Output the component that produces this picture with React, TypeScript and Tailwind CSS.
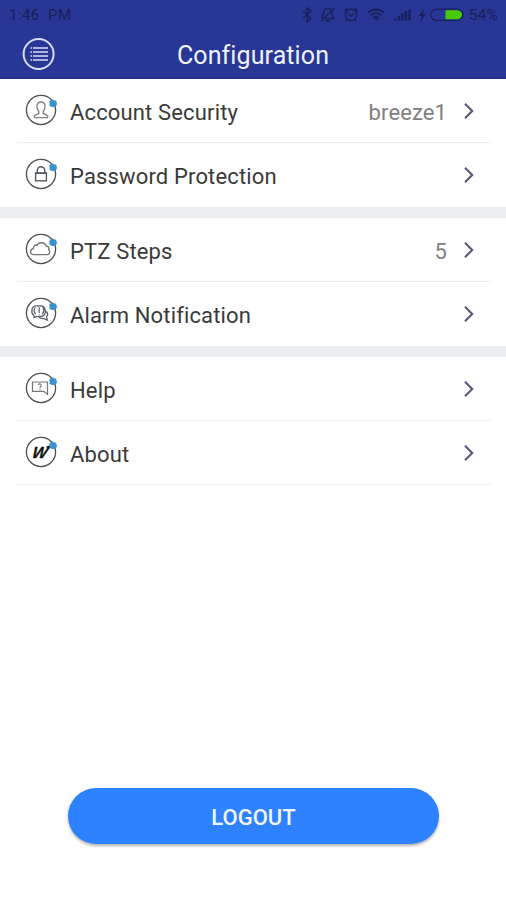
import React from 'react';

interface RowProps {
  icon: React.ReactNode;
  label: string;
  value?: string;
  last?: boolean;
}

const BadgeIcon: React.FC<{ children: React.ReactNode }> = ({ children }) => (
  <svg width="34" height="34" viewBox="0 0 34 34" fill="none" stroke="#555a5e" strokeWidth="1.2" className="mb-[2px] shrink-0">
    <circle cx="17" cy="17" r="14.6" stroke="#4b4f52" strokeWidth="1.3" />
    {children}
    <path d="M25.3 9.2l.7-1.6 1.6-.1 1.4-1.2 1.4 1.1 1.8.2.3 1.9.7 1.4-.8 1.3-.7 1.4-1.7.1-1.4.6-1.5-.7-1.8-.5.4-1.8z" fill="#3c91cf" stroke="none" />
  </svg>
);

const AccountIcon = () => (
  <BadgeIcon>
    <path d="M14.8 18.3c-1.1-1-1.8-2.8-1.8-4.8 0-2.7 1.7-4.5 4-4.5s4 1.8 4 4.5c0 2-.7 3.8-1.8 4.8v2.2l4.1 1.8c.7.4.8 2.3-.3 2.3H11c-1.1 0-1-1.9-.3-2.3l4.1-1.8z" stroke="#858585" strokeWidth="1.4" />
  </BadgeIcon>
);

const LockIcon = () => (
  <BadgeIcon>
    <rect x="11.6" y="16" width="10.8" height="7.8" strokeWidth="1.4" />
    <path d="M13.3 16v-2.5a3.7 3.7 0 0 1 7.4 0V16M11.6 16.3h10.8" strokeWidth="1.5" />
  </BadgeIcon>
);

const CloudIcon = () => (
  <BadgeIcon>
    <path d="M9.3 22.6c-3.9-.6-3.7-5.4 0-5.9 0-2.5 1.9-4.4 3.7-3.4 1.5-3.6 8-3.7 9.5 1.1 2.1-.3 2.9 1.4 2.1 3.2 1.9 1 1.2 4.7-1 5z" stroke="#777" strokeWidth="1.4" />
  </BadgeIcon>
);

const AlarmIcon = () => (
  <BadgeIcon>
    <path d="M10 21.4v-1.6c-3.4-2.7-2.8-9.5 1.8-10h5c4 .1 5.8 4.9 3.8 8.6-1.2 2-4.4 2.6-7.7 2.2zM15.2 11.2v5.8M15.2 18.4v1.2M11.2 11.5c-1.6 2-1.1 4.8.4 6.6M18.9 11.5c1.4 2 .9 4.8-.7 6.6" />
    <path d="M22 15.4c2.2 1.3 2.2 4.2.5 5.5l.9 3.3-3.2-1.6c-2.1.2-4.3-.2-5.4-1.5" />
  </BadgeIcon>
);

const HelpIcon = () => (
  <BadgeIcon>
    <path d="M8.5 11h15v12.4l-3.7-3H8.5z" stroke="#777" />
    <path d="M14.2 14.1c0-1.7 3.1-1.8 3 .1 0 1.3-1.2 1.4-1.2 2.7M16 18.1v1" stroke="#777" />
  </BadgeIcon>
);

const AboutIcon = () => (
  <BadgeIcon>
    <text x="8.4" y="22.8" fill="#111" stroke="#111" strokeWidth=".3" fontFamily="Liberation Sans, sans-serif" fontSize="16" fontWeight="700" fontStyle="italic" transform="skewX(-14) translate(4.6 0)">
      W
    </text>
    <path d="M22.5 12.4c1-.9 2-1.1 3.5-1" stroke="#111" strokeWidth="1.4" />
  </BadgeIcon>
);

const Row: React.FC<RowProps> = ({ icon, label, value, last }) => (
  <div className={`mr-[15px] ml-[17px] flex h-16 items-center border-b pr-[16px] pl-[7px] ${last ? 'border-transparent' : 'border-[#eeeff0]'}`}>
    {icon}
    <span className="ml-[12px] pt-[3px] text-[22px] tracking-[0.15px] text-[#3a3a3a]">{label}</span>
    <span className="mr-[16px] ml-auto pt-[3px] text-[22px] tracking-[0.1px] text-[#808080]">{value}</span>
    <svg width="12" height="18" viewBox="0 0 12 18" fill="none" stroke="#565978" strokeWidth="2.1" className="shrink-0">
      <path d="M2 1.8L9.2 9 2 16.2" />
    </svg>
  </div>
);

const StatusBar = () => (
  <div className="flex h-[30px] items-center justify-between pr-[8px] pl-[9px] text-[#18205b]">
    <span className="text-[15px] tracking-[0.45px] whitespace-pre">1:46  PM</span>
    <div className="flex items-center">
      <svg width="168" height="20" viewBox="301 5 168 20" fill="none" stroke="currentColor" strokeWidth="1.4">
        <path d="M303 11l8 7.5-4 3V8l4 3-8 7.5" />
        <path d="M321.5 18.5c2-2 1.5-7 3.5-9 2-1.8 4.5-1.5 6 .3 1.5 2 .7 6.5 2.8 8.7h-9M325 20.8h5M321 21L334.5 8" />
        <circle cx="351" cy="15" r="5.7" />
        <path d="M347.8 13.5l3.2 2.7 3.2-2.7M344.5 11l3-3M357.5 11l-3-3M347.2 19.3l-1.4 1.9M354.8 19.3l1.4 1.9" />
        <path d="M368 12.8c4.8-4.5 11.5-4.5 16.3 0M370.7 15.4c3.3-3 7.6-3 10.9 0M373.2 18c1.9-1.7 4-1.7 5.9 0" strokeWidth="1.9" />
        <path d="M373.8 18.2l2.4 2.5 2.4-2.5z" fill="currentColor" stroke="none" />
        <path d="M395.5 20.5v-2.2M399 20.5v-4.5M402.5 20.5v-7M406 20.5v-9.5M409.5 20.5V9.5" strokeWidth="2.3" />
        <path d="M424.5 9l-6 7h3.3l-1.8 5.8 6-7.8h-3.3z" fill="currentColor" stroke="none" />
        <path d="M436.5 9.2h20c3.4 0 6.5 2.6 6.5 5.6s-3.1 5.6-6.5 5.6h-20c-3.2 0-5.7-2.6-5.7-5.6s2.5-5.6 5.7-5.6z" strokeWidth="1.2" />
        <path d="M445.5 10.3H457c2.7 0 5 2 5 4.5s-2.3 4.5-5 4.5h-11.5z" fill="#48ca06" stroke="none" />
      </svg>
      <span className="pt-[2px] text-[15.5px] tracking-[0.2px]">54%</span>
    </div>
  </div>
);

const Divider = () => <div className="h-[11px] bg-[#ebeef0]" />;

export default function App() {
  return (
    <div className="flex h-[900px] w-[506px] flex-col overflow-hidden bg-white font-[Roboto,sans-serif]">
      <header className="h-[79px] border-b border-[#202d82] bg-[#283795]">
        <StatusBar />
        <div className="grid h-[48px] grid-cols-[56px_1fr_56px] items-center">
          <svg width="34" height="34" viewBox="0 0 34 34" fill="none" stroke="#d9dcf6" className="ml-[22px]">
            <circle cx="16.6" cy="17" r="15" strokeWidth="2" />
            <path d="M8.5 11h1.5M11 11h15M8.5 15h1.5M11 15h15M8.5 19h1.5M11 19h15M8.5 23h1.5M11 23h15" strokeWidth="1.5" />
          </svg>
          <h1 className="pt-[3px] text-center text-[25px] tracking-[0.1px] text-[#f0f2ff]">Configuration</h1>
        </div>
      </header>

      <main className="flex flex-1 flex-col">
        <Row icon={<AccountIcon />} label="Account Security" value="breeze1" />
        <Row icon={<LockIcon />} label="Password Protection" last />
        <Divider />
        <Row icon={<CloudIcon />} label="PTZ Steps" value="5" />
        <Row icon={<AlarmIcon />} label="Alarm Notification" last />
        <Divider />
        <Row icon={<HelpIcon />} label="Help" />
        <Row icon={<AboutIcon />} label="About" />

        <button className="mx-auto mt-auto mb-[56px] h-[56px] w-[371px] rounded-full bg-[#2e82ff] pt-[2px] pl-px text-[22px] font-medium text-[#f2f6ff] shadow-[0_2px_3px_rgba(0,0,0,0.3)]">
          LOGOUT
        </button>
      </main>
    </div>
  );
}
